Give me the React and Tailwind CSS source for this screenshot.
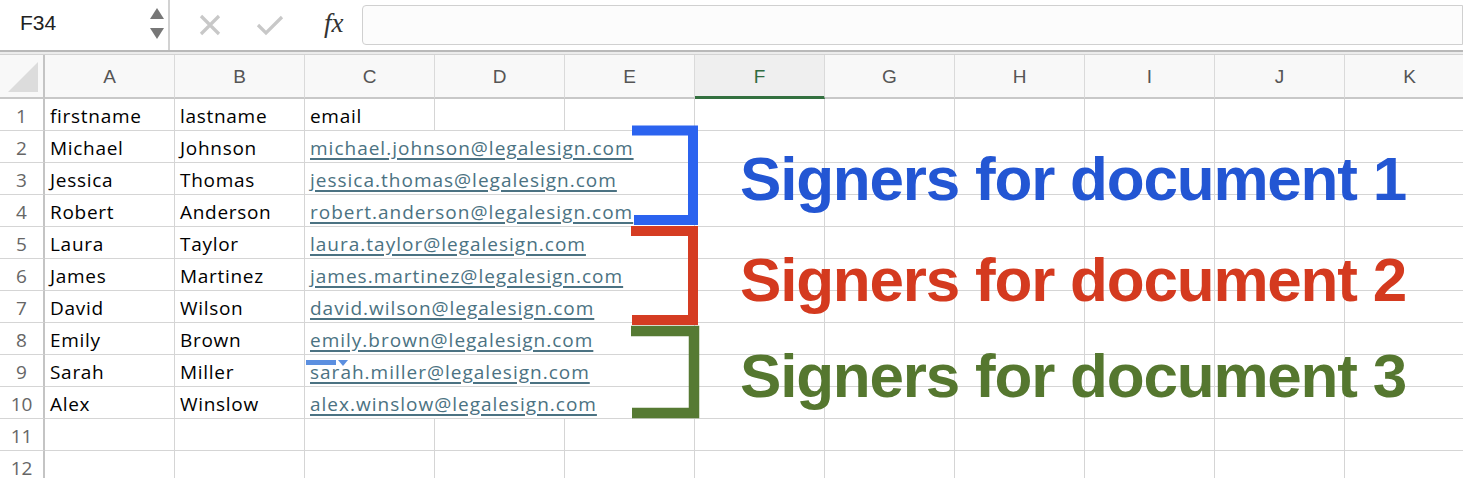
import React from "react";

const cols = ["A", "B", "C", "D", "E", "F", "G", "H", "I", "J", "K"];

const people = [
  ["Michael", "Johnson", "michael.johnson@legalesign.com"],
  ["Jessica", "Thomas", "jessica.thomas@legalesign.com"],
  ["Robert", "Anderson", "robert.anderson@legalesign.com"],
  ["Laura", "Taylor", "laura.taylor@legalesign.com"],
  ["James", "Martinez", "james.martinez@legalesign.com"],
  ["David", "Wilson", "david.wilson@legalesign.com"],
  ["Emily", "Brown", "emily.brown@legalesign.com"],
  ["Sarah", "Miller", "sarah.miller@legalesign.com"],
  ["Alex", "Winslow", "alex.winslow@legalesign.com"],
];

const cellFont = { fontFamily: '"Open Sans", "Noto Sans", sans-serif' };

function Cell({ children, noRight }) {
  return (
    <div
      className={
        "w-[130px] shrink-0 h-full border-b border-[#d5d5d5] pl-[5px] pt-[3px] flex items-center whitespace-nowrap overflow-visible text-[19px] tracking-[0.7px] text-black " +
        (noRight ? "" : "border-r")
      }
      style={cellFont}
    >
      {children}
    </div>
  );
}

function Row({ n, values, link }) {
  return (
    <div className="flex h-[32px]">
      <div
        className="w-[45px] shrink-0 h-full border-r-2 border-r-[#c4c4c4] border-b border-b-[#d5d5d5] pt-[3px] flex items-center justify-center text-[19px] text-[#666]"
        style={cellFont}
      >
        {n}
      </div>
      {cols.map((c, i) => (
        <Cell key={c} noRight={link && (i === 2 || i === 3)}>
          {i === 2 && link ? (
            <span className="text-[#4b7282] tracking-[1px] underline underline-offset-[3px] decoration-[1.5px]">
              {values[i]}
            </span>
          ) : (
            values[i] || ""
          )}
        </Cell>
      ))}
    </div>
  );
}

function FormulaBar() {
  return (
    <div className="flex h-[50px] bg-white">
      <div className="w-[170px] shrink-0 border-r-2 border-[#d2d2d2] flex items-center pl-[20px] pr-[4px] justify-between">
        <span className="text-[21px] text-[#222] mt-[-4px]" style={{ fontFamily: '"Liberation Sans", Arial, sans-serif' }}>
          F34
        </span>
        <div className="flex flex-col gap-[9px] mt-[-4px]">
          <svg width="14" height="11" viewBox="0 0 14 11">
            <path d="M7 0 L14 11 L0 11 Z" fill="#777" />
          </svg>
          <svg width="14" height="11" viewBox="0 0 14 11">
            <path d="M0 0 L14 0 L7 11 Z" fill="#777" />
          </svg>
        </div>
      </div>
      <div className="w-[192px] shrink-0 flex items-center pl-[28px] gap-[34px]">
        <svg width="24" height="24" viewBox="0 0 24 24">
          <path d="M3 3 L21 21 M21 3 L3 21" stroke="#c8c8c8" strokeWidth="3.2" fill="none" />
        </svg>
        <svg width="28" height="24" viewBox="0 0 28 24">
          <path d="M2 12 L10 20 L26 4" stroke="#c8c8c8" strokeWidth="3.2" fill="none" />
        </svg>
        <span
          className="text-[27px] italic text-[#333] ml-[6px] mt-[-4px]"
          style={{ fontFamily: '"Liberation Serif", "Times New Roman", serif' }}
        >
          fx
        </span>
      </div>
      <div className="flex-1 mt-[5px] h-[40px] border border-[#d0d0d0] rounded-l-[4px] bg-[#fcfcfc]" />
    </div>
  );
}

function HeaderRow() {
  return (
    <div className="flex h-[44px]">
      <div className="w-[45px] shrink-0 h-full border-r-2 border-r-[#c4c4c4] border-b-2 border-b-[#c8c8c8] bg-[#f8f8f8] flex items-end justify-end p-[5px]">
        <svg width="30" height="30" viewBox="0 0 30 30">
          <path d="M30 0 L30 30 L0 30 Z" fill="#dcdcdc" />
        </svg>
      </div>
      {cols.map((c) => {
        const active = c === "F";
        return (
          <div
            key={c}
            className={
              "w-[130px] shrink-0 h-full border-r border-r-[#dadada] pt-[3px] flex items-center justify-center text-[19px] " +
              (active
                ? "bg-[#efefef] text-[#2f6b40] border-b-[3px] border-b-[#33703f]"
                : "bg-[#f8f8f8] text-[#555] border-b-2 border-b-[#c8c8c8]")
            }
            style={{ fontFamily: '"Liberation Sans", Arial, sans-serif' }}
          >
            {c}
          </div>
        );
      })}
    </div>
  );
}

export default function App() {
  return (
    <div className="relative w-[1463px] h-[478px] overflow-hidden bg-white">
      <FormulaBar />
      <div className="h-[5px] border-t-2 border-t-[#b9b9b9] border-b border-b-[#d3d3d3] bg-[#ececec]" />
      <HeaderRow />
      <Row n={1} values={["firstname", "lastname", "email"]} />
      {people.map((p, i) => (
        <Row key={i} n={i + 2} values={p} link />
      ))}
      <Row n={11} values={[]} />
      <Row n={12} values={[]} />

      {/* note marker on C9 */}
      <div className="absolute left-[306px] top-[360px] w-[30px] h-[5px] bg-[#5b8fe0]" />
      <svg className="absolute left-[338px] top-[360px]" width="10" height="6" viewBox="0 0 10 6">
        <path d="M0 0 L10 0 L5 6 Z" fill="#5b8fe0" />
      </svg>

      {/* brackets */}
      <svg className="absolute left-0 top-0 pointer-events-none" width="1463" height="478" viewBox="0 0 1463 478">
        <path d="M632 130.5 H693 V220 H634" stroke="#2b63ef" strokeWidth="10" fill="none" strokeLinejoin="miter" />
        <path d="M631 231 H693 V320 H632" stroke="#d53c22" strokeWidth="10" fill="none" strokeLinejoin="miter" />
        <path d="M631 331 H694 V413 H632" stroke="#567a33" strokeWidth="10.5" fill="none" strokeLinejoin="miter" />
      </svg>

      <div
        className="absolute left-[740px] top-[148px] text-[62px] leading-none font-bold tracking-[-1.2px] text-[#2356d3] whitespace-nowrap"
        style={{ fontFamily: '"Liberation Sans", Arial, sans-serif' }}
      >
        Signers for document 1
      </div>
      <div
        className="absolute left-[740px] top-[249px] text-[62px] leading-none font-bold tracking-[-1.2px] text-[#d43a1f] whitespace-nowrap"
        style={{ fontFamily: '"Liberation Sans", Arial, sans-serif' }}
      >
        Signers for document 2
      </div>
      <div
        className="absolute left-[740px] top-[345px] text-[62px] leading-none font-bold tracking-[-1.2px] text-[#55772f] whitespace-nowrap"
        style={{ fontFamily: '"Liberation Sans", Arial, sans-serif' }}
      >
        Signers for document 3
      </div>
    </div>
  );
}
